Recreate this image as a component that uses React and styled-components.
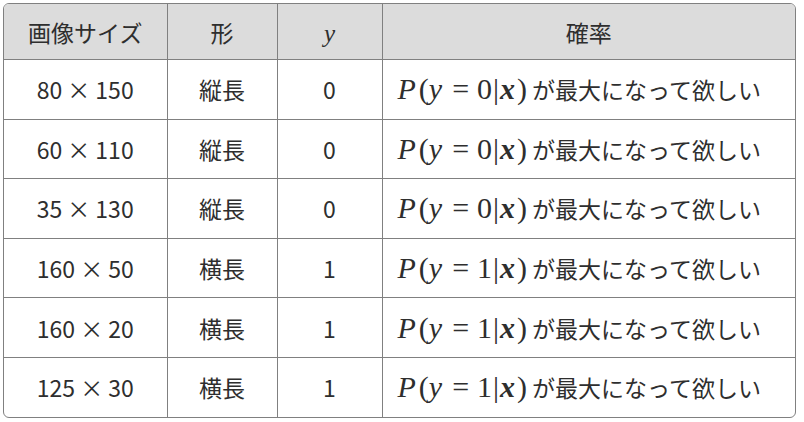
import styled, { createGlobalStyle } from "styled-components";

const GlobalStyle = createGlobalStyle`
  body {
    margin: 0;
    background: #ffffff;
    font-family: "Noto Sans CJK JP", "Noto Sans", sans-serif;
    color: #2e2e2e;
  }
`;

const Frame = styled.div`
  margin: 3px 0 0 3px;
  width: 793px;
  border: 1.5px solid #808080;
  border-radius: 6px;
  overflow: hidden;
  box-sizing: border-box;
`;

const Table = styled.table`
  width: 100%;
  border-collapse: collapse;
  table-layout: fixed;
`;

const Head = styled.th`
  height: 55px;
  padding: 0;
  background: #dcdcdc;
  font-weight: 400;
  font-size: 23px;
  text-align: center;
  border-left: ${({ $first }) => ($first ? "none" : "1.5px solid #808080")};
  border-bottom: 1.5px solid #808080;
`;

const Cell = styled.td`
  height: 58.6px;
  padding: ${({ $math }) => ($math ? "0 0 0 15px" : "0")};
  font-size: 23px;
  font-weight: 400;
  text-align: ${({ $math }) => ($math ? "left" : "center")};
  border-left: ${({ $first }) => ($first ? "none" : "1.5px solid #808080")};
  border-top: 1.5px solid #808080;
  white-space: nowrap;
`;

const Row = styled.tr`
  &:first-child td {
    border-top: none;
  }
`;

const Math = styled.span`
  font-family: "Liberation Serif", "DejaVu Serif", serif;
  font-size: ${({ $size }) => $size || 30}px;
  font-style: italic;
  font-weight: ${({ $bold }) => ($bold ? 700 : 400)};
  margin-right: ${({ $kern }) => $kern || 0}px;
`;

const Op = styled.span`
  font-family: "Liberation Serif", "DejaVu Serif", serif;
  font-size: 30px;
  margin: 0 ${({ $gap }) => $gap || 0}px;
`;

const Times = styled.span`
  margin: 0 5px;
`;

const Tail = styled.span`
  margin-left: 5px;
`;

const rows = [
  ["80", "150", "縦長", 0],
  ["60", "110", "縦長", 0],
  ["35", "130", "縦長", 0],
  ["160", "50", "横長", 1],
  ["160", "20", "横長", 1],
  ["125", "30", "横長", 1],
];

const Prob = ({ y }) => (
  <>
    <Math $kern={3}>P</Math>
    <Op>(</Op>
    <Math $kern={2}>y</Math>
    <Op $gap={8}>=</Op>
    <Op>{y}</Op>
    <Op $gap={1}>|</Op>
    <Math $bold $kern={2}>x</Math>
    <Op>)</Op>
    <Tail>が最大になって欲しい</Tail>
  </>
);

export default function App() {
  return (
    <>
      <GlobalStyle />
      <Frame>
        <Table>
          <colgroup>
            <col style={{ width: 163 }} />
            <col style={{ width: 110 }} />
            <col style={{ width: 105 }} />
            <col />
          </colgroup>
          <thead>
            <tr>
              <Head $first>画像サイズ</Head>
              <Head>形</Head>
              <Head>
                <Math $size={25}>y</Math>
              </Head>
              <Head>確率</Head>
            </tr>
          </thead>
          <tbody>
            {rows.map(([w, h, shape, y], i) => (
              <Row key={i}>
                <Cell $first>
                  {w}
                  <Times>×</Times>
                  {h}
                </Cell>
                <Cell>{shape}</Cell>
                <Cell>{y}</Cell>
                <Cell $math>
                  <Prob y={y} />
                </Cell>
              </Row>
            ))}
          </tbody>
        </Table>
      </Frame>
    </>
  );
}
